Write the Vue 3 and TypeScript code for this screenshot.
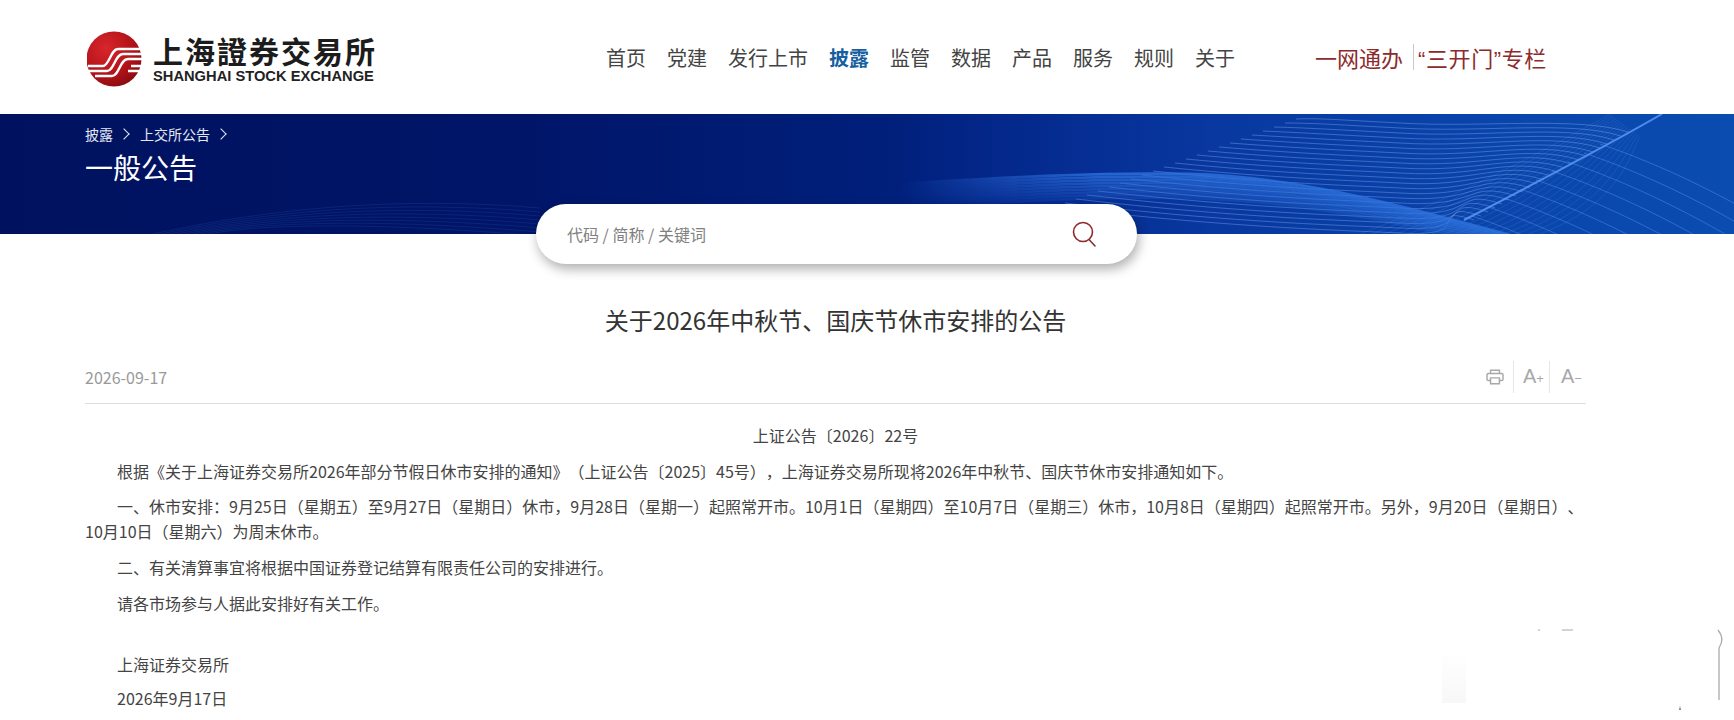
<template>
  <div class="page">
    <header class="header">
      <a class="logo">
        <svg class="logo-mark" width="58" height="60" viewBox="0 0 58 60">
          <defs>
            <radialGradient id="logoRed" cx="0.35" cy="0.3" r="0.85">
              <stop offset="0" stop-color="#d8262c" />
              <stop offset="0.6" stop-color="#b01218" />
              <stop offset="1" stop-color="#7a0a0e" />
            </radialGradient>
          </defs>
          <circle cx="27" cy="30" r="27.5" fill="url(#logoRed)" />
          <g fill="none" stroke="#fff" stroke-width="2.4">
            <path d="M1 37H16C22 37 24 20 31 20H57" />
            <path d="M1 42H20C27 42 28 25 36 25H57" />
            <path d="M8 47H25C32 47 33 30 41 30H57" />
            <path d="M44 37H57M41 42H57" />
          </g>
        </svg>
        <div class="logo-text">
          <div class="logo-cn">上海證券交易所</div>
          <div class="logo-en">SHANGHAI STOCK EXCHANGE</div>
        </div>
      </a>
      <nav class="nav">
        <a v-for="item in navItems" :key="item" :class="{ active: item === '披露' }">{{ item }}</a>
      </nav>
      <div class="special">
        <a>一网通办</a>
        <i></i>
        <a class="three">“三开门”专栏</a>
      </div>
    </header>

    <section class="banner">
      <svg class="waves" width="1734" height="120" viewBox="0 0 1734 120">
        <defs>
          <linearGradient id="bandFade" gradientUnits="userSpaceOnUse" x1="900" y1="0" x2="1100" y2="0">
            <stop offset="0" stop-color="#2f74e0" stop-opacity="0" />
            <stop offset="1" stop-color="#2f74e0" stop-opacity="1" />
          </linearGradient>
        </defs>
        <g fill="none">
          <path v-for="(d, i) in waves.faint" :key="'f' + i" :d="d" stroke="#3b6fd0" stroke-opacity="0.22" stroke-width="0.8" />
          <path v-for="(d, i) in waves.hatch" :key="'h' + i" :d="d" stroke="#6f9ff0" stroke-opacity="0.2" stroke-width="0.8" />
          <path v-for="(d, i) in waves.arc" :key="'a' + i" :d="d" stroke="#8cb4f8" stroke-opacity="0.42" stroke-width="0.9" />
          <path v-for="(d, i) in waves.tail" :key="'t' + i" :d="d" stroke="#7fabf5" stroke-opacity="0.38" stroke-width="0.9" />
          <path
            v-for="(d, i) in waves.band"
            :key="'b' + i"
            :d="d"
            stroke="url(#bandFade)"
            :stroke-opacity="0.78 - i * 0.07"
            stroke-width="2.8"
          />
          <path d="M1662 0C1610 30 1530 72 1464 106" stroke="#5a98f4" stroke-opacity="0.85" stroke-width="2" />
        </g>
      </svg>
      <div class="banner-inner">
        <div class="crumbs">
          <span>披露</span><b></b><span>上交所公告</span><b></b>
        </div>
        <h2>一般公告</h2>
      </div>
      <div class="search">
        <span>代码 / 简称 / 关键词</span>
        <svg width="28" height="28" viewBox="0 0 28 28" fill="none" stroke="#8c2b2b" stroke-width="1.6">
          <circle cx="13" cy="12" r="9.5" />
          <path d="M19 19.5L25 26" stroke-linecap="round" />
        </svg>
      </div>
    </section>

    <main class="article">
      <h1>关于2026年中秋节、国庆节休市安排的公告</h1>
      <div class="meta">
        <span>2026-09-17</span>
        <div class="tools">
          <svg width="18" height="16" viewBox="0 0 20 18" fill="none" stroke="#a8a8a8" stroke-width="1.6">
            <path d="M5 5V1.5H15V5" />
            <path d="M5 13H2.5A1.5 1.5 0 0 1 1 11.5V6.5A1.5 1.5 0 0 1 2.5 5H17.5A1.5 1.5 0 0 1 19 6.5V11.5A1.5 1.5 0 0 1 17.5 13H15" />
            <path d="M5 10H15V16.5H5Z" />
          </svg>
          <i></i>
          <span class="font-btn plus">A<small>+</small></span>
          <i></i>
          <span class="font-btn minus">A<small>−</small></span>
        </div>
      </div>
      <div class="body">
        <p class="doc-no">上证公告〔2026〕22号</p>
        <p v-for="(line, i) in paragraphs" :key="i" :class="line.cls">{{ line.text }}</p>
      </div>
    </main>

    <!-- leftovers of a wiped watermark, bottom right -->
    <svg class="smudge" width="354" height="120" viewBox="0 0 354 120">
      <defs>
        <linearGradient id="smudgeFade" x1="0" y1="0" x2="0" y2="1">
          <stop offset="0" stop-color="#ddd" stop-opacity="0.1" />
          <stop offset="1" stop-color="#ccc" stop-opacity="0.5" />
        </linearGradient>
      </defs>
      <rect x="62" y="55" width="24" height="48" fill="url(#smudgeFade)" opacity="0.3" />
      <path d="M158 30h2M182 30H193" stroke="#aaa" fill="none" />
      <path d="M338 30C343 36 343 42 339 48V100" stroke="#aaa" stroke-width="1.3" fill="none" />
      <path d="M299 110L300 106L301 110Z" fill="#777" />
    </svg>
  </div>
</template>

<script setup lang="ts">
const navItems = ['首页', '党建', '发行上市', '披露', '监管', '数据', '产品', '服务', '规则', '关于']

const paragraphs = [
  { text: '根据《关于上海证券交易所2026年部分节假日休市安排的通知》（上证公告〔2025〕45号），上海证券交易所现将2026年中秋节、国庆节休市安排通知如下。' },
  { text: '一、休市安排：9月25日（星期五）至9月27日（星期日）休市，9月28日（星期一）起照常开市。10月1日（星期四）至10月7日（星期三）休市，10月8日（星期四）起照常开市。另外，9月20日（星期日）、10月10日（星期六）为周末休市。' },
  { text: '二、有关清算事宜将根据中国证券登记结算有限责任公司的安排进行。' },
  { text: '请各市场参与人据此安排好有关工作。' },
  { text: '上海证券交易所', cls: 'gap' },
  { text: '2026年9月17日' },
]

function family(n: number, fn: (i: number) => string) {
  return Array.from({ length: n }, (_, i) => fn(i))
}

// banner line art, each group is a bundle of nearly parallel curves
const waves = {
  faint: family(8, i => `M${153 + i * 8} 120C270 ${94 + i * 2} 400 ${82 + i * 4} 540 ${94 + i * 4}`),
  arc: family(23, i => {
    const y = 6 + i * 5
    const rx = 1628 - i * 7
    const ry = 18 + i * 4
    return `M${1296 - i * 11} ${5 + i * 4}C${1320 - i * 4} ${y - 2} 1340 ${y} 1400 ${y + 3}C1480 ${y + 8} ${rx - 50} ${ry - 16} ${rx} ${ry}`
  }),
  tail: family(9, i => {
    const rx = 1600 - i * 16
    const ry = 30 + i * 9
    return `M${rx} ${ry}C${rx + 60} ${ry + 20} ${rx + 130} ${ry + 54} ${rx + 190} ${ry + 92}`
  }),
  hatch: family(16, i => `M${1360 + i * 12} 120C${1440 + i * 12} 90 ${1540 + i * 6} 40 ${1610 + i * 2} ${i * 1.5}`),
  band: family(9, i => `M900 ${70 + i * 3}C1000 ${64 + i * 3} 1090 ${58 + i * 3} 1190 ${60 + i * 3}C1300 ${63 + i * 3} 1400 ${92 + i * 2} 1510 ${121 + i * 2}`),
}
</script>

<style>
html, body { margin: 0; background: #fff; }
</style>

<style scoped>
.page {
  position: relative;
  height: 720px;
  overflow: hidden;
  font-family: "Noto Sans CJK SC", "Liberation Sans", sans-serif;
  color: #444;
  text-spacing-trim: space-all;
}
.header {
  height: 114px;
  display: flex;
  align-items: center;
  padding-left: 87px;
}
.logo { display: flex; align-items: center; width: 519px; padding-top: 3px; box-sizing: border-box; }
.logo-mark { margin-right: 8px; }
.logo-text { width: 222px; }
.logo-cn {
  font-size: 30px;
  line-height: 34px;
  font-weight: 700;
  color: #1c1c1c;
  letter-spacing: 2px;
  white-space: nowrap;
}
.logo-en {
  margin-top: 1px;
  font-family: "Liberation Sans", sans-serif;
  font-size: 14.7px;
  line-height: 16px;
  font-weight: 700;
  color: #222;
  white-space: nowrap;
}
.nav { display: flex; gap: 21px; font-size: 20px; color: #444; }
.nav .active { color: #175f9f; font-weight: 700; }
.special {
  display: flex;
  align-items: center;
  margin-left: 80px;
  font-family: "Liberation Sans", "Noto Sans CJK SC", sans-serif;
  font-size: 22px;
  color: #8c2b2b;
}
.special i { width: 1px; height: 26px; background: #c9c9c9; margin: 0 4px 0 10px; }
.special .three { letter-spacing: 0.6px; }

.banner {
  position: relative;
  height: 120px;
  background: linear-gradient(90deg, #00125f 0%, #001568 30%, #00207c 52%, #04288c 58%, #0838a0 70%, #0a46ac 88%, #0a4cb0 100%);
}
.waves { position: absolute; left: 0; top: 0; }
.banner-inner { position: relative; padding: 9px 0 0 85px; color: #fff; }
.crumbs { display: flex; align-items: center; font-size: 14px; line-height: 22px; color: #e4e8f5; }
.crumbs b {
  width: 7px;
  height: 7px;
  border-top: 1px solid #e4e8f5;
  border-right: 1px solid #e4e8f5;
  transform: rotate(45deg);
  margin: 0 12px 0 7px;
}
.banner h2 { margin: 2px 0 0; font-size: 28px; line-height: 40px; font-weight: 400; }
.search {
  position: absolute;
  left: 536px;
  top: 90px;
  width: 601px;
  height: 60px;
  box-sizing: border-box;
  padding: 0 39px 0 31px;
  display: flex;
  align-items: center;
  justify-content: space-between;
  background: #fff;
  border-radius: 30px;
  box-shadow: 2px 5px 12px rgba(0, 0, 0, 0.32);
  font-size: 16px;
  color: #808080;
}

.article { padding: 0 148px 0 85px; }
.article h1 {
  margin: 0;
  padding-top: 68px;
  font-size: 24px;
  line-height: 36px;
  font-weight: 400;
  color: #333;
  text-align: center;
}
.meta {
  margin-top: 20px;
  height: 38px;
  padding-bottom: 7px;
  display: flex;
  align-items: center;
  justify-content: space-between;
  border-bottom: 1px solid #dedede;
  font-size: 16px;
  color: #999;
}
.tools { display: flex; align-items: center; }
.tools svg { margin-right: 9px; }
.tools i { width: 1px; height: 32px; background: #e6e6e6; }
.font-btn {
  box-sizing: border-box;
  font-family: "Liberation Sans", sans-serif;
  font-size: 20px;
  line-height: 24px;
  color: #a8a8a8;
}
.font-btn small { font-size: 13px; }
.plus { width: 35px; padding-left: 9px; }
.minus { width: 36px; padding-left: 11px; }

.body { padding-top: 19px; font-size: 16px; line-height: 25px; color: #444; }
.body p { margin: 0 0 10.7px; text-indent: 32px; }
.body .doc-no { text-align: center; text-indent: 0; }
.body .gap { margin-top: 36px; margin-bottom: 9px; }

.smudge { position: absolute; left: 1380px; top: 600px; }
</style>
